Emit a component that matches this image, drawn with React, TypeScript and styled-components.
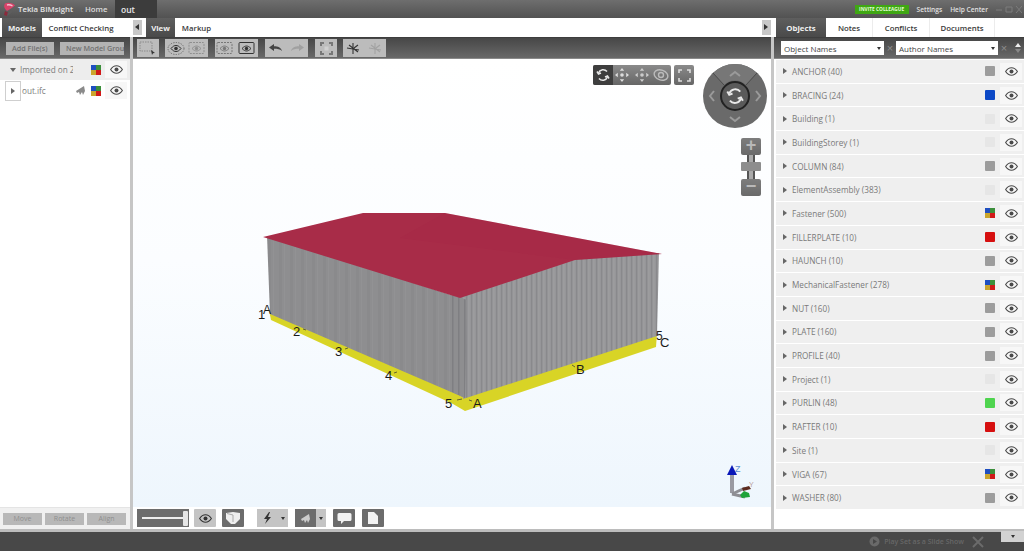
import React from "react";
import styled, { createGlobalStyle } from "styled-components";

const Global = createGlobalStyle`
  html, body { margin: 0; padding: 0; background: #fff; overflow: hidden; }
  * { box-sizing: border-box; }
  body { font-family: "Open Sans", "Noto Sans", "Liberation Sans", sans-serif; }
`;

const Page = styled.div`
  width: 1024px; height: 551px; display: flex; flex-direction: column; overflow: hidden; background: #fff;
`;

/* ---------- title bar ---------- */
const TitleBar = styled.header`
  height: 18px; flex: none; display: flex; align-items: stretch;
  background: linear-gradient(#6e6e6e, #525252);
  color: #e4e4e4; font-size: 7.8px; font-weight: 600;
`;
const Brand = styled.div`
  width: 85px; display: flex; align-items: center; gap: 2px; padding-left: 2px; white-space: nowrap;
`;
const TitleLink = styled.div`
  width: 30px; display: flex; align-items: center; justify-content: flex-start; color: #dcdcdc;
`;
const DocTab = styled.div`
  width: 42px; display: flex; align-items: center; padding-left: 6px; background: #3c3c3c; color: #e8e8e8; font-size: 8.5px;
`;
const TitleSpacer = styled.div` flex: 1; `;
const Invite = styled.div`
  width: 54px; height: 9px; align-self: center; display: flex; align-items: center; justify-content: center;
  background: #3fa713; color: #e4ffd8; font-size: 4.8px; font-weight: 700; white-space: nowrap; margin-right: 8px;
`;
const TitleAction = styled.div`
  display: flex; align-items: center; font-size: 6.6px; margin-right: 8px; color: #e0e0e0; white-space: nowrap;
`;
const WinButtons = styled.div`
  display: flex; align-items: center; width: 28px; padding-left: 0;
`;

/* ---------- main area ---------- */
const Main = styled.div` flex: 1; display: flex; min-height: 0; `;
const SidePanel = styled.section<{ $w: number }>`
  width: ${p => p.$w}px; flex: none; display: flex; flex-direction: column; background: #fff;
`;
const CenterPanel = styled.section` width: 638px; flex: none; display: flex; flex-direction: column; `;
const Splitter = styled.div`
  width: 3px; flex: none; background: linear-gradient(#fff 19px, #c6c6c6 19px);
`;

const TabRow = styled.div<{ $pad?: number }>`
  height: 19px; flex: none; display: flex; align-items: stretch; padding-left: ${p => p.$pad ?? 0}px; background: #fff;
`;
const Tab = styled.div<{ $active?: boolean; $w: number; $sep?: boolean }>`
  width: ${p => p.$w}px; display: flex; align-items: center; justify-content: center; white-space: nowrap;
  font-size: 7.8px; font-weight: ${p => (p.$active ? 700 : 600)};
  color: ${p => (p.$active ? "#f0f0f0" : "#3a3a3a")};
  background: ${p => (p.$active ? "linear-gradient(#5e5e5e, #4a4a4a)" : "#fff")};
  border-right: ${p => (p.$sep ? "1px solid #ececec" : "none")};
`;
const CollapseArrow = styled.div<{ $dir: "l" | "r" }>`
  width: 9px; height: 15px; align-self: center; background: #c8c8c8; position: relative;
  &::after {
    content: ""; position: absolute; left: 2px; top: 4px; border: 3.5px solid transparent; border-left-width: 0; border-right-width: 0;
    ${p => (p.$dir === "l" ? "border-right: 4px solid #333;" : "border-left: 4px solid #333;")}
  }
`;
const TabGap = styled.div` flex: 1; `;
const FixedGap = styled.div` width: 4px; flex: none; `;

const ToolBar = styled.div<{ $pad?: number }>`
  height: 22px; flex: none; display: flex; align-items: center; gap: 6px; padding-left: ${p => p.$pad ?? 0}px;
  background: linear-gradient(#474747, #686868); border-top: 1px solid #3e3e3e; border-bottom: 1px solid #8a8a8a; overflow: hidden;
`;
const TextButton = styled.div<{ $w: number }>`
  width: ${p => p.$w}px; height: 13px; flex: none; background: #b3b3b3; color: #707070; font-size: 7.2px; font-weight: 600;
  display: flex; align-items: center; padding-left: 6px; white-space: nowrap; overflow: hidden;
`;
const ToolGroup = styled.div<{ $w: number; $ml: number }>`
  width: ${p => p.$w}px; margin-left: ${p => p.$ml}px; height: 18px; flex: none; background: #bcbcbc;
  display: flex; align-items: center; justify-content: space-around;
`;
const CenterTools = styled(ToolBar)` gap: 0; padding-left: 4px; `;

/* ---------- left panel ---------- */
const ModelRow = styled.div<{ $shade?: boolean }>`
  height: 21px; flex: none; display: flex; align-items: center; gap: 4px; padding-right: 3px; background: ${p => (p.$shade ? "#ededed" : "#fff")};
`;
const Expander = styled.div<{ $box?: boolean }>`
  width: 16px; height: 20px; margin-left: 5px; flex: none; display: flex; align-items: center; justify-content: center;
  border: ${p => (p.$box ? "1px solid #cfcfcf" : "none")};
`;
const CaretRight = styled.span`
  display: inline-block; border: 3px solid transparent; border-right-width: 0; border-left: 4px solid #666;
`;
const CaretDown = styled.span`
  display: inline-block; border: 3.5px solid transparent; border-bottom-width: 0; border-top: 4px solid #666;
`;
const ModelName = styled.div<{ $ml: number; $end: number }>`
  flex: 1; min-width: 0; white-space: nowrap; font-size: 8.2px; color: #7c7c7c;
  margin-left: ${p => p.$ml}px; padding-right: ${p => p.$end}px;
  & > span { display: block; overflow: hidden; }
`;
const EyeBox = styled.div`
  width: 22px; height: 17px; flex: none; background: #f7f7f7; display: flex; align-items: center; justify-content: center;
`;
const LeftSpacer = styled.div` flex: 1; `;
const LeftFoot = styled.div`
  height: 22px; flex: none; display: flex; gap: 3px; align-items: center; padding: 0 0 0 3px; background: #f0f0f0; border-top: 1px solid #e4e4e4;
`;
const FootButton = styled.div<{ $w: number }>`
  width: ${p => p.$w}px; height: 12px; background: #b8b8b8; color: #8f8f8f; font-size: 7px; display: flex; align-items: center; justify-content: center;
`;

/* ---------- viewer ---------- */
const Viewer = styled.div`
  flex: 1; position: relative; min-height: 0; background: linear-gradient(#ffffff 0%, #fbfdff 45%, #eef6fd 100%); overflow: hidden;
`;
const Scene = styled.svg` position: absolute; left: 0; top: 0; width: 638px; height: 448px; `;
const NavBar = styled.div`
  position: absolute; left: 460px; top: 6px; width: 78px; height: 20px; display: flex; border-radius: 2px;
  background: linear-gradient(#8a8a8a, #666); align-items: center; overflow: hidden;
`;
const NavCell = styled.div<{ $on?: boolean }>`
  width: 19.5px; height: 20px; display: flex; align-items: center; justify-content: center; background: ${p => (p.$on ? "#3e3e3e" : "transparent")};
`;
const FullButton = styled(NavBar)` left: 541px; width: 20px; justify-content: center; `;
const Compass = styled.svg` position: absolute; left: 570px; top: 5px; width: 64px; height: 64px; `;
const ZoomControl = styled.div`
  position: absolute; left: 608px; top: 79px; width: 20px; height: 58px; display: flex; flex-direction: column; align-items: center;
`;
const ZoomBtn = styled.div`
  width: 20px; height: 17px; flex: none; border-radius: 2px; background: linear-gradient(#7d7d7d, #6a6a6a); color: #b9b9b9;
  font-size: 18px; line-height: 15px; text-align: center; font-family: "Liberation Sans", sans-serif; font-weight: 700;
`;
const ZoomTrack = styled.div`
  width: 8px; flex: 1; background: linear-gradient(90deg, #555 0 2px, #aaa 2px 6px, #555 6px); position: relative;
`;
const ZoomThumb = styled.div`
  position: absolute; left: -6px; top: 7px; width: 20px; height: 9px; background: #8d8d8d; border-radius: 1px;
`;
const Axis = styled.svg` position: absolute; left: 592px; top: 403px; width: 34px; height: 37px; `;

/* ---------- bottom bar ---------- */
const BottomBar = styled.div`
  height: 22px; flex: none; display: flex; align-items: center; padding-left: 4px; background: #fff;
`;
const SliderBox = styled.div`
  width: 52px; height: 18px; background: #6d6d6d; display: flex; align-items: center; padding: 0 1px 0 5px; flex: none;
`;
const SliderLine = styled.div` flex: 1; height: 2px; background: #eee; `;
const SliderKnob = styled.div` width: 5px; height: 15px; background: #e6e6e6; border-radius: 1px; `;
const BarButton = styled.div<{ $w?: number; $ml: number; $dark?: boolean }>`
  width: ${p => p.$w ?? 22}px; height: 18px; margin-left: ${p => p.$ml}px; flex: none; border-radius: 1px;
  background: ${p => (p.$dark ? "#6c6c6c" : "#c4c4c4")}; display: flex; align-items: center; justify-content: center;
`;
const SplitButton = styled.div<{ $ml: number }>`
  width: 31px; height: 18px; margin-left: ${p => p.$ml}px; flex: none; display: flex; background: #c4c4c4;
`;
const SplitMain = styled.div<{ $dark?: boolean }>`
  width: 21px; display: flex; align-items: center; justify-content: center; background: ${p => (p.$dark ? "#6c6c6c" : "#c4c4c4")};
`;
const SplitArrow = styled.div` flex: 1; display: flex; align-items: center; justify-content: center; `;
const CaretSmall = styled.span`
  display: inline-block; border: 2.5px solid transparent; border-bottom-width: 0; border-top: 3px solid #333;
`;

/* ---------- right panel ---------- */
const FilterBar = styled(ToolBar)` gap: 0; padding-left: 7px; `;
const Select = styled.div<{ $w: number }>`
  width: ${p => p.$w}px; height: 14px; flex: none; background: #fff; color: #444; font-size: 8px; display: flex; align-items: center; justify-content: space-between; padding: 0 3px;
`;
const ClearX = styled.div<{ $w: number }>`
  width: ${p => p.$w}px; flex: none; text-align: center; color: #8c8c8c; font-size: 11px; line-height: 14px; font-family: "Liberation Sans", sans-serif;
`;
const SortArrows = styled.div` display: flex; flex-direction: column; gap: 2px; align-items: center; width: 14px; margin-left: 1px; `;
const ArrowUp = styled.span<{ $c: string }>`
  display: block; border: 3.5px solid transparent; border-top-width: 0; border-bottom: 4px solid ${p => p.$c};
`;
const ArrowDown = styled.span<{ $c: string }>`
  display: block; border: 3.5px solid transparent; border-bottom-width: 0; border-top: 4px solid ${p => p.$c};
`;
const ObjectList = styled.div` flex: 1; padding: 1px 0 0 2px; display: flex; flex-direction: column; gap: 1px; `;
const ObjectRow = styled.div`
  height: 22.7px; flex: none; display: flex; align-items: center; background: #efefef; padding: 0 2px 0 7px;
`;
const ObjectName = styled.div`
  flex: 1; margin-left: 5px; font-size: 8.2px; color: #7a7a7a; white-space: nowrap;
`;
const Chip = styled.div<{ $c: string }>`
  width: 10px; height: 10px; border-radius: 1px; background: ${p => p.$c}; margin-right: 5px; flex: none;
`;
const MultiSlot = styled.div` margin-right: 5px; display: flex; flex: none; `;

/* ---------- status bar ---------- */
const StatusStrip = styled.div` height: 3px; flex: none; background: #bcbcbc; `;
const StatusBar = styled.footer`
  height: 19px; flex: none; background: #484848; display: flex; align-items: center; justify-content: flex-end; position: relative; padding-right: 39px;
  color: #676767; font-size: 7px; font-weight: 600; gap: 4px;
`;
const StatusTab = styled.div`
  position: absolute; right: 0; top: -1px; width: 23px; height: 11px; background: #d2d2d2; display: flex; align-items: center; justify-content: center;
`;
const ToolsSlot = styled.div` margin-left: 4px; display: flex; `;

/* ---------- icons ---------- */
const Eye = ({ c = "#4a4a4a" }: { c?: string }) => (
  <svg width="13" height="9" viewBox="0 0 13 9">
    <path d="M.6 4.5C2.4 1.8 4.3.8 6.5.8s4.1 1 5.9 3.7C10.6 7.2 8.7 8.2 6.5 8.2S2.4 7.2.6 4.5Z" fill="none" stroke={c} strokeWidth="1.1" />
    <circle cx="6.5" cy="4.5" r="2" fill={c} />
  </svg>
);
const Multi = () => (
  <svg width="10" height="10" viewBox="0 0 10 10">
    <rect width="5" height="5" fill="#1f4fc0" />
    <rect x="5" width="5" height="5" fill="#3b8f3b" />
    <rect y="5" width="5" height="5" fill="#caa52c" />
    <rect x="5" y="5" width="5" height="5" fill="#d01818" />
  </svg>
);
const Ghost = ({ c = "#8a8a8a" }: { c?: string }) => (
  <svg width="12" height="11" viewBox="0 0 12 11">
    <path d="M1 6 9 1l1 5-2 4-1-3-2 3-1-3-2 1Z" fill={c} />
  </svg>
);
const SelectFrame = () => (
  <svg width="18" height="15" viewBox="0 0 18 15">
    <rect x="1" y="1" width="12" height="9" fill="none" stroke="#8a8a8a" strokeDasharray="1.5 1" />
    <path d="m12 9 4 3-2 .3-1 1.7Z" fill="#333" />
  </svg>
);
const EyeOval = () => (
  <svg width="18" height="15" viewBox="0 0 18 15">
    <ellipse cx="9" cy="7.500" rx="8" ry="6" fill="none" stroke="#666" strokeDasharray="1.2 1.300" />
    <path d="M4 7.500C6 5 7.500 4.500 9 4.500s3 .5 5 3c-2 2.500-3.500 3-5 3s-3-.5-5-3Z" fill="none" stroke="#333" />
    <circle cx="9" cy="7.500" r="1.800" fill="#333" />
  </svg>
);
const GhostPair = ({ c, dark }: { c: string; dark?: boolean }) => (
  <svg width="19" height="15" viewBox="0 0 19 15">
    <rect x="1" y="1.500" width="15" height="11" rx="1" fill="none" stroke={c} strokeDasharray={dark ? undefined : "2 1"} />
    <path d="M4 7.500c2-2 3.500-2.500 4.500-2.500s2.500.5 4.500 2.500c-2 2-3.500 2.500-4.500 2.500S6 9.500 4 7.500Z" fill="none" stroke={c} />
    <circle cx="8.500" cy="7.500" r="1.700" fill={c} />
  </svg>
);
const BackArrow = ({ flip, c }: { flip?: boolean; c: string }) => (
  <svg width="13" height="9" viewBox="0 0 13 9" transform={flip ? "scale(-1 1)" : undefined}>
    <path d="M0 3.500 5 0v2.300c4 0 7 1.200 8 4.700-2-2-4.500-2.300-8-2.300V7Z" fill={c} />
  </svg>
);
const CornerBoxes = () => (
  <svg width="13" height="13" viewBox="0 0 13 13" fill="#777">
    <path d="M0 0h4v2H2v2H0ZM9 0h4v4h-2V2H9ZM0 9h2v2h2v2H0ZM11 9h2v4H9v-2h2Z" />
    <rect x="4.500" y="4.500" width="4" height="4" fill="#d0d0d0" />
  </svg>
);
const Scissor = ({ c }: { c: string }) => (
  <svg width="15" height="13" viewBox="0 0 15 13" fill="none" stroke={c} strokeWidth="1.100">
    <path d="M7 1v11M1 6l12 2M3 3l9 7M12 3 8 6" />
  </svg>
);
const Corners = ({ c = "#666" }: { c?: string }) => (
  <svg width="13" height="13" viewBox="0 0 13 13" fill="none" stroke={c} strokeWidth="1.600">
    <path d="M1 4V1h3M9 1h3v3M12 9v3H9M4 12H1V9" />
  </svg>
);
const Rotate = ({ c = "#e8e8e8" }: { c?: string }) => (
  <svg width="14" height="14" viewBox="0 0 14 14" fill="none" stroke={c} strokeWidth="1.500">
    <path d="M2.500 5A5 5 0 0 1 11 3.500" />
    <path d="M11.500 9A5 5 0 0 1 3 10.500" />
    <path d="m1 3.500 1.500 2.500L5 5M13 10.500 11.500 8 9 9" />
  </svg>
);
const MoveIcon = ({ c = "#ddd" }: { c?: string }) => (
  <svg width="14" height="14" viewBox="0 0 14 14" fill={c}>
    <path d="m7 0 2.200 2.800H4.800ZM7 14l-2.200-2.800h4.400ZM0 7l2.800-2.200v4.400ZM14 7l-2.800 2.200V4.800Z" />
    <circle cx="7" cy="7" r="1.800" />
  </svg>
);
const Orbit = () => (
  <svg width="16" height="14" viewBox="0 0 16 14" fill="none" stroke="#bbb" strokeWidth="1.400">
    <ellipse cx="8" cy="7" rx="7" ry="5" transform="rotate(20 8 7)" />
    <circle cx="8" cy="7" r="2.500" />
  </svg>
);
const Bolt = () => (
  <svg width="9" height="12" viewBox="0 0 9 12"><path d="M6 0 1 7h3l-2 5 6-7H5l2-5Z" fill="#333" /></svg>
);
const CubeIcon = () => (
  <svg width="14" height="12" viewBox="0 0 14 12"><path d="M0 1 7 0l7 1v6l-5 5H5L0 7Z" fill="#eee" /><path d="M1 1.500 7 3v7" stroke="#aaa" fill="none" /></svg>
);
const Comment = () => (
  <svg width="15" height="12" viewBox="0 0 15 12"><path d="M2 1h11a1.500 1.500 0 0 1 1.500 1.500v5A1.500 1.500 0 0 1 13 9H7l-3 3V9H2A1.500 1.500 0 0 1 .5 7.500v-5A1.500 1.500 0 0 1 2 1Z" fill="#f2f2f2" /></svg>
);
const Doc = () => (
  <svg width="10" height="12" viewBox="0 0 10 12"><path d="M0 0h6l4 4v8H0Z" fill="#f2f2f2" /></svg>
);
const Logo = () => (
  <svg width="14" height="15" viewBox="0 0 14 15">
    <path d="M3 1.500C6 0 11 1 13 3.500 10 6 7 8 5 9 3 7 1 5 3 1.500Z" fill="#d9436a" />
    <path d="M5 3c2-.5 4 0 5.500 1" stroke="#f6c0cf" strokeWidth="1.400" fill="none" />
    <path d="M3 9l3 1.500-1 3.500-3-1Z" fill="#8a2a3c" />
    <path d="M6 10.500 10 8l-.5 3L5 14Z" fill="#5d5d5d" />
  </svg>
);
const Tools = () => (
  <svg width="13" height="12" viewBox="0 0 13 12" fill="none" stroke="#6b6b6b" strokeWidth="2">
    <path d="M1 1l10 10M11 1 1 11" />
  </svg>
);

const OBJECTS: [string, string][] = [
  ["ANCHOR (40)", "#9c9c9c"], ["BRACING (24)", "#0b48c6"], ["Building (1)", "#e6e6e6"], ["BuildingStorey (1)", "#e6e6e6"],
  ["COLUMN (84)", "#9c9c9c"], ["ElementAssembly (383)", "#e6e6e6"], ["Fastener (500)", "multi"], ["FILLERPLATE (10)", "#d60f0f"],
  ["HAUNCH (10)", "#9c9c9c"], ["MechanicalFastener (278)", "multi"], ["NUT (160)", "#9c9c9c"], ["PLATE (160)", "#9c9c9c"],
  ["PROFILE (40)", "#9c9c9c"], ["Project (1)", "#e6e6e6"], ["PURLIN (48)", "#4fd44f"], ["RAFTER (10)", "#d60f0f"],
  ["Site (1)", "#e6e6e6"], ["VIGA (67)", "multi"], ["WASHER (80)", "#9c9c9c"],
];

const LABELS: [string, number, number, number][] = [
  ["1", 258, 319, 13], ["A", 263, 314, 12], ["2", 293, 336, 13], ["3", 335, 356, 13], ["4", 385, 380, 13],
  ["5", 445, 408, 13], ["A", 473, 408, 13], ["B", 576, 374, 13], ["5", 656, 340, 12], ["C", 660, 347, 13],
];
const TICKS = "M303 329l3 1M345 349l3-1M394 373l3-1M457 400l5-1M469 400l3 1M572 365l3 2";

const Building = () => (
  <Scene viewBox="133 59 638 448">
    <defs>
      <pattern id="wallL" width="11" height="10" patternUnits="userSpaceOnUse">
        <rect width="11" height="10" fill="#8e8e90" />
        <rect x="4" width="3" height="10" fill="#8a8a8c" />
        <rect x="9" width="1" height="10" fill="#929294" />
      </pattern>
      <pattern id="wallC" width="6" height="10" patternUnits="userSpaceOnUse">
        <rect width="6" height="10" fill="#8e8e90" />
        <rect x="2" width="1.500" height="10" fill="#7f7f82" />
      </pattern>
      <pattern id="wallR" width="5" height="10" patternUnits="userSpaceOnUse">
        <rect width="5" height="10" fill="#969699" />
        <rect x="1" width="1.200" height="10" fill="#89898c" />
        <rect x="3.500" width="0.800" height="10" fill="#a2a2a4" />
      </pattern>
    </defs>
    <polygon points="269,310 463,395 657,333 656,347 465,411 453,404 271,320" fill="#d8d426" />
    <polygon points="458,296 575,258 659,253 657,336 463,399" fill="url(#wallR)" />
    <polygon points="267,236 467,300 465,398 270,314" fill="url(#wallL)" />
    <polygon points="452,295 467,300 465,398 450,391" fill="url(#wallC)" />
    <polygon points="263,237 363,213 445,213 662,254 575,260 460,298" fill="#a82c48" />
    <polygon points="445,213 662,254 575,260 400,238" fill="#a32545" opacity="0.2" />
    <path d={TICKS} stroke="#333" strokeWidth="0.700" fill="none" />
    {LABELS.map(([t, x, y, s], i) => (
      <text key={i} x={x} y={y} fontSize={s} fontFamily="Liberation Sans, sans-serif" fill="#1a1a1a">{t}</text>
    ))}
  </Scene>
);

export default function App() {
  return (
    <Page>
      <Global />
      <TitleBar>
        <Brand><Logo />Tekla BIMsight</Brand>
        <TitleLink>Home</TitleLink>
        <DocTab>out</DocTab>
        <TitleSpacer />
        <Invite>INVITE COLLEAGUE</Invite>
        <TitleAction>Settings</TitleAction>
        <TitleAction>Help Center</TitleAction>
        <WinButtons>
          <svg width="26" height="9" viewBox="0 0 26 9" fill="none" stroke="#7c7c7c">
            <path d="M0 5h6M10 2h6v5h-6zM20 1l6 7M26 1l-6 7" />
          </svg>
        </WinButtons>
      </TitleBar>
      <Main>
        <SidePanel $w={130}>
          <TabRow $pad={2}>
            <Tab $active $w={40}>Models</Tab>
            <Tab $w={78}>Conflict Checking</Tab>
          </TabRow>
          <ToolBar $pad={6}>
            <TextButton $w={48}>Add File(s)</TextButton>
            <TextButton $w={64}>New Model Group</TextButton>
          </ToolBar>
          <ModelRow $shade>
            <Expander><CaretDown /></Expander>
            <ModelName $ml={-5} $end={14}><span>Imported on 2</span></ModelName>
            <Multi />
            <EyeBox><Eye /></EyeBox>
          </ModelRow>
          <ModelRow>
            <Expander $box><CaretRight /></Expander>
            <ModelName $ml={-3} $end={0}>out.ifc</ModelName>
            <Ghost />
            <Multi />
            <EyeBox><Eye /></EyeBox>
          </ModelRow>
          <LeftSpacer />
          <LeftFoot>
            <FootButton $w={39}>Move</FootButton>
            <FootButton $w={39}>Rotate</FootButton>
            <FootButton $w={39}>Align</FootButton>
          </LeftFoot>
        </SidePanel>
        <Splitter />
        <CenterPanel>
          <TabRow>
            <CollapseArrow $dir="l" />
            <FixedGap />
            <Tab $active $w={29}>View</Tab>
            <Tab $w={43}>Markup</Tab>
            <TabGap />
            <CollapseArrow $dir="r" />
          </TabRow>
          <CenterTools>
            <ToolGroup $w={22} $ml={0}><SelectFrame /></ToolGroup>
            <ToolGroup $w={43} $ml={6}><EyeOval /><GhostPair c="#8f8f8f" /></ToolGroup>
            <ToolGroup $w={43} $ml={7}><GhostPair c="#777" /><GhostPair c="#333" dark /></ToolGroup>
            <ToolGroup $w={43} $ml={7}><BackArrow c="#444" /><BackArrow flip c="#a0a0a0" /></ToolGroup>
            <ToolGroup $w={22} $ml={7}><CornerBoxes /></ToolGroup>
            <ToolGroup $w={43} $ml={6}><Scissor c="#333" /><Scissor c="#a2a2a2" /></ToolGroup>
          </CenterTools>
          <Viewer>
            <Building />
            <NavBar>
              <NavCell $on><Rotate /></NavCell>
              <NavCell><MoveIcon /></NavCell>
              <NavCell><MoveIcon c="#ccc" /></NavCell>
              <NavCell><Orbit /></NavCell>
            </NavBar>
            <FullButton><Corners c="#ddd" /></FullButton>
            <Compass viewBox="0 0 64 64">
              <circle cx="32" cy="32" r="32" fill="#6a6a6a" />
              <path d="M32 0a32 32 0 0 1 22 9L43 21a15 15 0 0 0-22 0L10 9A32 32 0 0 1 32 0Z" fill="#777" />
              <path d="M21 21 10 9M43 21 54 9" stroke="#4a4a4a" />
              <circle cx="32" cy="32" r="14" fill="#5a5a5a" stroke="#222" strokeWidth="2" />
              <g fill="none" stroke="#9a9a9a" strokeWidth="2">
                <path d="m27 12 5-4 5 4M27 53l5 4 5-4M11 27l-4 5 4 5M53 27l4 5-4 5" />
              </g>
              <g transform="translate(23 23) scale(1.300)"><Rotate /></g>
            </Compass>
            <ZoomControl>
              <ZoomBtn>+</ZoomBtn>
              <ZoomTrack><ZoomThumb /></ZoomTrack>
              <ZoomBtn>−</ZoomBtn>
            </ZoomControl>
            <Axis viewBox="0 0 34 37">
              <path d="M7 10v21" stroke="#9a9aa2" strokeWidth="4" />
              <path d="M7 32 20 26" stroke="#8e8e94" strokeWidth="3" />
              <path d="M7 32 20 35" stroke="#8e8e94" strokeWidth="3" />
              <path d="M7 3 2 13h10Z" fill="#0a18b8" />
              <path d="m17 26 7-2 2 3-8 2Z" fill="#5c2a1e" />
              <path d="m15 33 4-4 5 2 1 4-8 1Z" fill="#1fa33a" />
              <text x="10" y="10" fontSize="9" fontFamily="Liberation Sans, sans-serif" fill="#5f8fd0">Z</text>
              <text x="24" y="25" fontSize="7" fontFamily="Liberation Sans, sans-serif" fill="#b8a0a0">Y</text>
            </Axis>
          </Viewer>
          <BottomBar>
            <SliderBox><SliderLine /><SliderKnob /></SliderBox>
            <BarButton $ml={5}><Eye c="#333" /></BarButton>
            <BarButton $ml={6} $dark><CubeIcon /></BarButton>
            <SplitButton $ml={13}><SplitMain><Bolt /></SplitMain><SplitArrow><CaretSmall /></SplitArrow></SplitButton>
            <SplitButton $ml={7}><SplitMain $dark><Ghost c="#ccc" /></SplitMain><SplitArrow><CaretSmall /></SplitArrow></SplitButton>
            <BarButton $ml={7} $dark><Comment /></BarButton>
            <BarButton $ml={7} $dark><Doc /></BarButton>
          </BottomBar>
        </CenterPanel>
        <Splitter />
        <SidePanel $w={250}>
          <TabRow $pad={2}>
            <Tab $active $w={50}>Objects</Tab>
            <Tab $w={47} $sep>Notes</Tab>
            <Tab $w={57} $sep>Conflicts</Tab>
            <Tab $w={65} $sep>Documents</Tab>
          </TabRow>
          <FilterBar>
            <Select $w={103}>Object Names<CaretSmall /></Select>
            <ClearX $w={12}>×</ClearX>
            <Select $w={102}>Author Names<CaretSmall /></Select>
            <ClearX $w={12}>×</ClearX>
            <SortArrows><ArrowUp $c="#eee" /><ArrowDown $c="#888" /></SortArrows>
          </FilterBar>
          <ObjectList>
            {OBJECTS.map(([name, color]) => (
              <ObjectRow key={name}>
                <CaretRight />
                <ObjectName>{name}</ObjectName>
                {color === "multi" ? <MultiSlot><Multi /></MultiSlot> : <Chip $c={color} />}
                <EyeBox><Eye /></EyeBox>
              </ObjectRow>
            ))}
          </ObjectList>
        </SidePanel>
      </Main>
      <StatusStrip />
      <StatusBar>
        <svg width="11" height="11" viewBox="0 0 11 11"><circle cx="5.500" cy="5.500" r="5" fill="#6a6a6a" /><path d="M4 3l4 2.500L4 8Z" fill="#484848" /></svg>
        Play Set as a Slide Show
        <ToolsSlot><Tools /></ToolsSlot>
        <StatusTab><CaretSmall /></StatusTab>
      </StatusBar>
    </Page>
  );
}
